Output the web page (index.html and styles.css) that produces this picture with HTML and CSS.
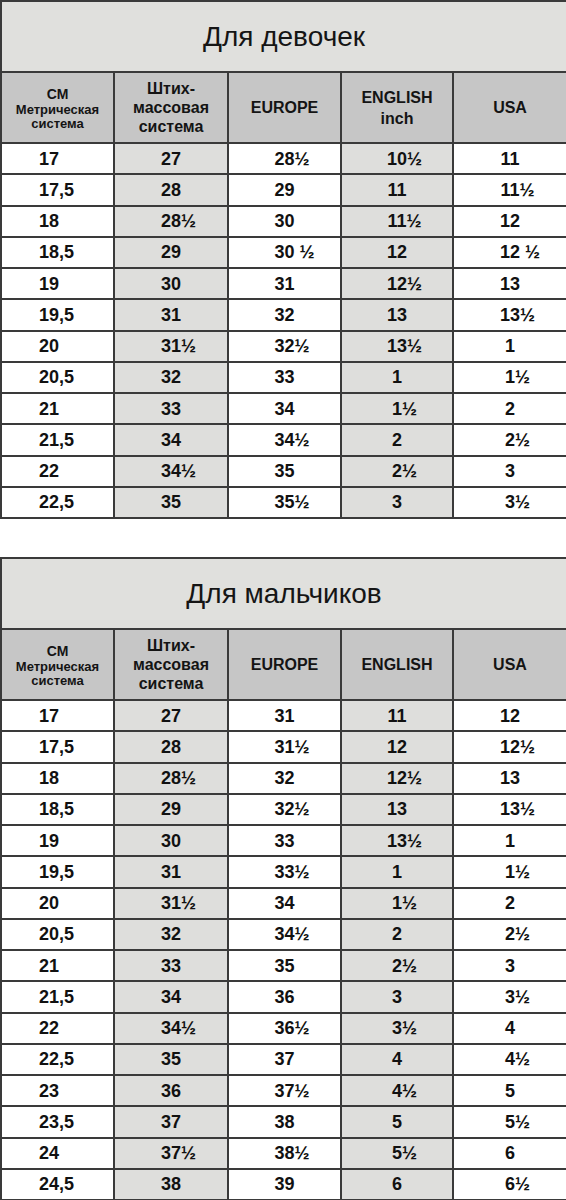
FILE: index.html
```html
<!DOCTYPE html>
<html lang="ru">
<head>
<meta charset="utf-8">
<title>Таблица размеров</title>
<link rel="stylesheet" href="styles.css">
</head>
<body>
<div class="page">
<table class="sizes">
  <colgroup><col class="c1"><col class="c2"><col class="c3"><col class="c4"><col class="c5"></colgroup>
  <thead>
    <tr class="title-row"><th colspan="5" class="title">Для девочек</th></tr>
    <tr class="head">
      <th class="h1"><span class="cm">СМ</span><span class="metric">Метрическая<br>система</span></th>
      <th>Штих-<br>массовая<br>система</th>
      <th>EUROPE</th>
      <th class="eng">ENGLISH<br>inch</th>
      <th>USA</th>
    </tr>
  </thead>
  <tbody>
    <tr><td>17</td><td>27</td><td>28<span class="h">½</span></td><td>10<span class="h">½</span></td><td>11</td></tr>
    <tr><td>17,5</td><td>28</td><td>29</td><td>11</td><td>11<span class="h">½</span></td></tr>
    <tr><td>18</td><td>28<span class="h">½</span></td><td>30</td><td>11<span class="h">½</span></td><td>12</td></tr>
    <tr><td>18,5</td><td>29</td><td>30<span class="h">&nbsp;½</span></td><td>12</td><td>12<span class="h">&nbsp;½</span></td></tr>
    <tr><td>19</td><td>30</td><td>31</td><td>12<span class="h">½</span></td><td>13</td></tr>
    <tr><td>19,5</td><td>31</td><td>32</td><td>13</td><td>13<span class="h">½</span></td></tr>
    <tr><td>20</td><td>31<span class="h">½</span></td><td>32<span class="h">½</span></td><td>13<span class="h">½</span></td><td>1</td></tr>
    <tr><td>20,5</td><td>32</td><td>33</td><td>1</td><td>1<span class="h">½</span></td></tr>
    <tr><td>21</td><td>33</td><td>34</td><td>1<span class="h">½</span></td><td>2</td></tr>
    <tr><td>21,5</td><td>34</td><td>34<span class="h">½</span></td><td>2</td><td>2<span class="h">½</span></td></tr>
    <tr><td>22</td><td>34<span class="h">½</span></td><td>35</td><td>2<span class="h">½</span></td><td>3</td></tr>
    <tr><td>22,5</td><td>35</td><td>35<span class="h">½</span></td><td>3</td><td>3<span class="h">½</span></td></tr>
  </tbody>
</table>

<table class="sizes second">
  <colgroup><col class="c1"><col class="c2"><col class="c3"><col class="c4"><col class="c5"></colgroup>
  <thead>
    <tr class="title-row"><th colspan="5" class="title">Для мальчиков</th></tr>
    <tr class="head">
      <th class="h1"><span class="cm">СМ</span><span class="metric">Метрическая<br>система</span></th>
      <th>Штих-<br>массовая<br>система</th>
      <th>EUROPE</th>
      <th>ENGLISH</th>
      <th>USA</th>
    </tr>
  </thead>
  <tbody>
    <tr><td>17</td><td>27</td><td>31</td><td>11</td><td>12</td></tr>
    <tr><td>17,5</td><td>28</td><td>31<span class="h">½</span></td><td>12</td><td>12<span class="h">½</span></td></tr>
    <tr><td>18</td><td>28<span class="h">½</span></td><td>32</td><td>12<span class="h">½</span></td><td>13</td></tr>
    <tr><td>18,5</td><td>29</td><td>32<span class="h">½</span></td><td>13</td><td>13<span class="h">½</span></td></tr>
    <tr><td>19</td><td>30</td><td>33</td><td>13<span class="h">½</span></td><td>1</td></tr>
    <tr><td>19,5</td><td>31</td><td>33<span class="h">½</span></td><td>1</td><td>1<span class="h">½</span></td></tr>
    <tr><td>20</td><td>31<span class="h">½</span></td><td>34</td><td>1<span class="h">½</span></td><td>2</td></tr>
    <tr><td>20,5</td><td>32</td><td>34<span class="h">½</span></td><td>2</td><td>2<span class="h">½</span></td></tr>
    <tr><td>21</td><td>33</td><td>35</td><td>2<span class="h">½</span></td><td>3</td></tr>
    <tr><td>21,5</td><td>34</td><td>36</td><td>3</td><td>3<span class="h">½</span></td></tr>
    <tr><td>22</td><td>34<span class="h">½</span></td><td>36<span class="h">½</span></td><td>3<span class="h">½</span></td><td>4</td></tr>
    <tr><td>22,5</td><td>35</td><td>37</td><td>4</td><td>4<span class="h">½</span></td></tr>
    <tr><td>23</td><td>36</td><td>37<span class="h">½</span></td><td>4<span class="h">½</span></td><td>5</td></tr>
    <tr><td>23,5</td><td>37</td><td>38</td><td>5</td><td>5<span class="h">½</span></td></tr>
    <tr><td>24</td><td>37<span class="h">½</span></td><td>38<span class="h">½</span></td><td>5<span class="h">½</span></td><td>6</td></tr>
    <tr><td>24,5</td><td>38</td><td>39</td><td>6</td><td>6<span class="h">½</span></td></tr>
  </tbody>
</table>
</div>
</body>
</html>
```

FILE: styles.css
```css
html, body {
  margin: 0;
  padding: 0;
  background: #ffffff;
}

body {
  font-family: "Liberation Sans", Arial, sans-serif;
  color: #111111;
}

.page {
  width: 566px;
  display: flex;
  flex-direction: column;
  gap: 38px;
}

.sizes {
  width: 566px;
  border-collapse: collapse;
  table-layout: fixed;
  border: 2px solid #3a3a3a;
}

.c1 { width: 113px; }
.c2 { width: 114px; }
.c3 { width: 113px; }
.c4 { width: 112px; }
.c5 { width: 114px; }

.sizes th,
.sizes td {
  border: 2px solid #3a3a3a;
  padding: 0;
}

.title {
  height: 69px;
  background: #e0e0dd;
  font-weight: normal;
  font-size: 28px;
  text-align: center;
  vertical-align: middle;
  padding-top: 1px;
  padding-right: 10px;
  color: #151515;
}

.head th {
  height: 69px;
  background: #c6c6c6;
  font-weight: bold;
  font-size: 16px;
  line-height: 19px;
  text-align: center;
  vertical-align: middle;
  color: #141414;
}

.head .eng {
  line-height: 21px;
}

.cm {
  display: block;
  font-size: 14px;
  line-height: 18px;
}

.metric {
  display: block;
  font-size: 13px;
  line-height: 14px;
}

.sizes tbody td {
  height: 29.25px;
  font-weight: bold;
  font-size: 18px;
  line-height: 20px;
  text-align: center;
  vertical-align: middle;
  background: #ffffff;
  white-space: nowrap;
}

.sizes tbody td:nth-child(1) {
  text-align: left;
  padding-left: 37px;
}

.sizes tbody td:nth-child(2),
.sizes tbody td:nth-child(4) {
  background: #dededc;
}

.h {
  display: inline-block;
  width: 0;
  white-space: nowrap;
}
```
